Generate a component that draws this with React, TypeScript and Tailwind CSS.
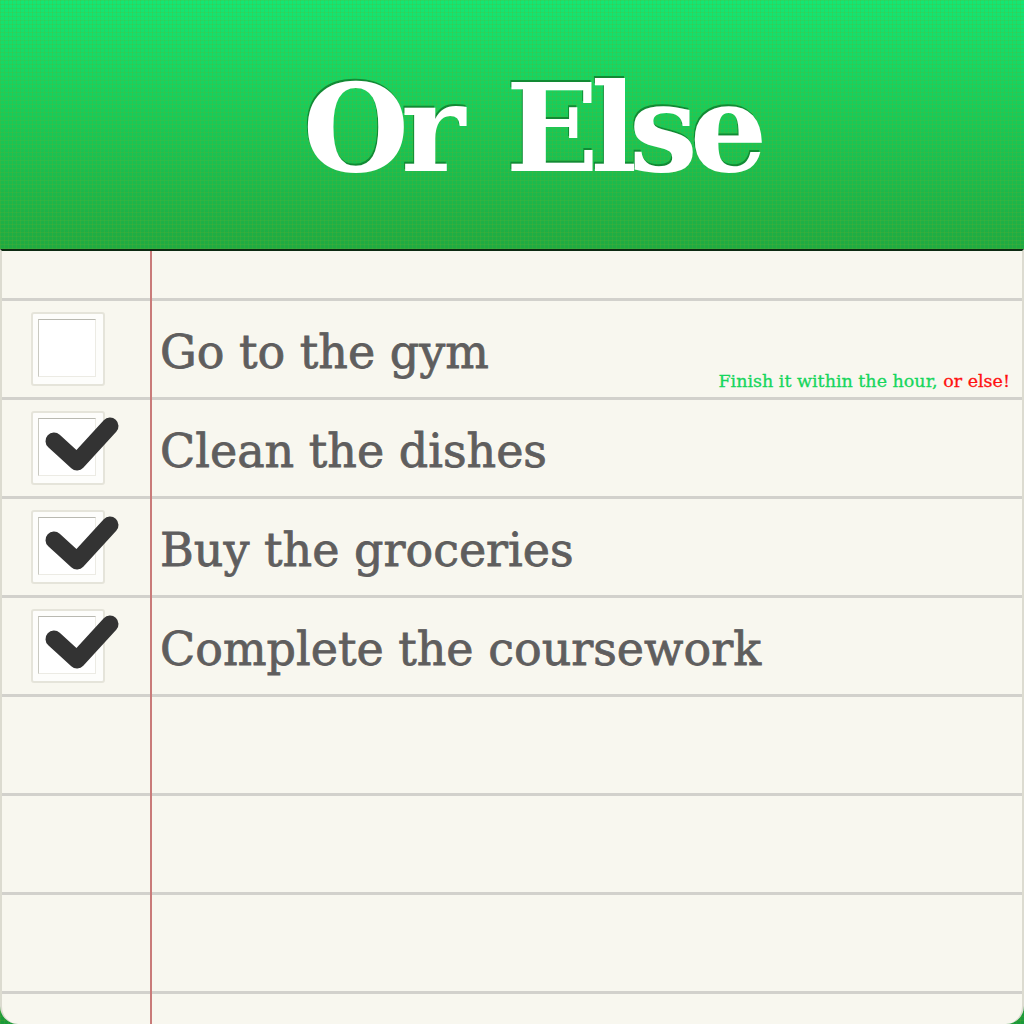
const tasks = [
  { label: "Go to the gym", done: false, note: true },
  { label: "Clean the dishes", done: true },
  { label: "Buy the groceries", done: true },
  { label: "Complete the coursework", done: true },
  { label: "", done: false, empty: true },
  { label: "", done: false, empty: true },
  { label: "", done: false, empty: true },
];

function Checkbox({ checked }: { checked: boolean }) {
  return (
    <div className="relative ml-[29px] h-[74px] w-[74px] rounded-[3px] border-2 border-[#e5e4da] bg-[#fdfdfb]">
      <div className="absolute left-[5px] top-[5px] h-[58px] w-[58px] border border-[#ecebe4] border-l-[#c9c9c1] border-t-[#b9b9b1] bg-white" />
      {checked && (
        <svg className="absolute -left-[2px] -top-[2px] overflow-visible" width="90" height="74" viewBox="0 0 90 74">
          <path
            d="M23 30 L46 51 L79 15"
            fill="none"
            stroke="#333333"
            strokeWidth="17"
            strokeLinecap="round"
            strokeLinejoin="round"
          />
        </svg>
      )}
    </div>
  );
}

export default function App() {
  return (
    <div className="relative flex h-[1024px] w-full flex-col overflow-hidden bg-[image:linear-gradient(rgba(110,170,40,0.2)_1px,transparent_1px),linear-gradient(90deg,rgba(110,170,40,0.2)_1px,transparent_1px),linear-gradient(180deg,#14e674_0%,#19c957_12%,#1fab42_24%,#1a9a3a_100%)] bg-[length:4px_4px,4px_4px,100%_100%]">
      {/* header */}
      <header className="flex h-[249px] shrink-0 items-center justify-center pl-[38px] pt-[6px]">
        <h1 className="font-['DejaVu_Serif',serif] text-[122px] font-bold leading-none tracking-[-8px] [word-spacing:14px] text-white [text-shadow:-1px_-2px_0_#128a34]">
          Or Else
        </h1>
      </header>

      {/* paper */}
      <main className="relative flex flex-1 flex-col rounded-b-[18px] border-x-2 border-t-2 border-x-[#dcdbd0] border-t-[#0c2a12] bg-[#f8f7ef]">
        <div className="h-[50px] shrink-0 border-b-[3px] border-[#d2d1cc]" />
        {tasks.map((t, i) => (
          <div key={i} className="relative flex h-[99px] shrink-0 items-center border-b-[3px] border-[#d2d1cc]">
            {!t.empty && <Checkbox checked={t.done} />}
            {!t.empty && (
              <span className="absolute left-[158px] top-[17px] font-['DejaVu_Serif',serif] text-[46px] tracking-[0px] text-[#5f5e5e] [-webkit-text-stroke:0.8px_#5f5e5e]">
                {t.label}
              </span>
            )}
            {t.note && (
              <span className="absolute bottom-[3px] right-[12px] font-['DejaVu_Serif',serif] text-[17.5px] text-[#16d65c] [-webkit-text-stroke:0.3px_currentColor]">
                Finish it within the hour, <span className="text-[#ff1010]">or else!</span>
              </span>
            )}
          </div>
        ))}
        {/* red margin line */}
        <div className="absolute bottom-0 left-[148px] top-0 w-[2px] bg-[#c97b79]" />
      </main>
    </div>
  );
}
